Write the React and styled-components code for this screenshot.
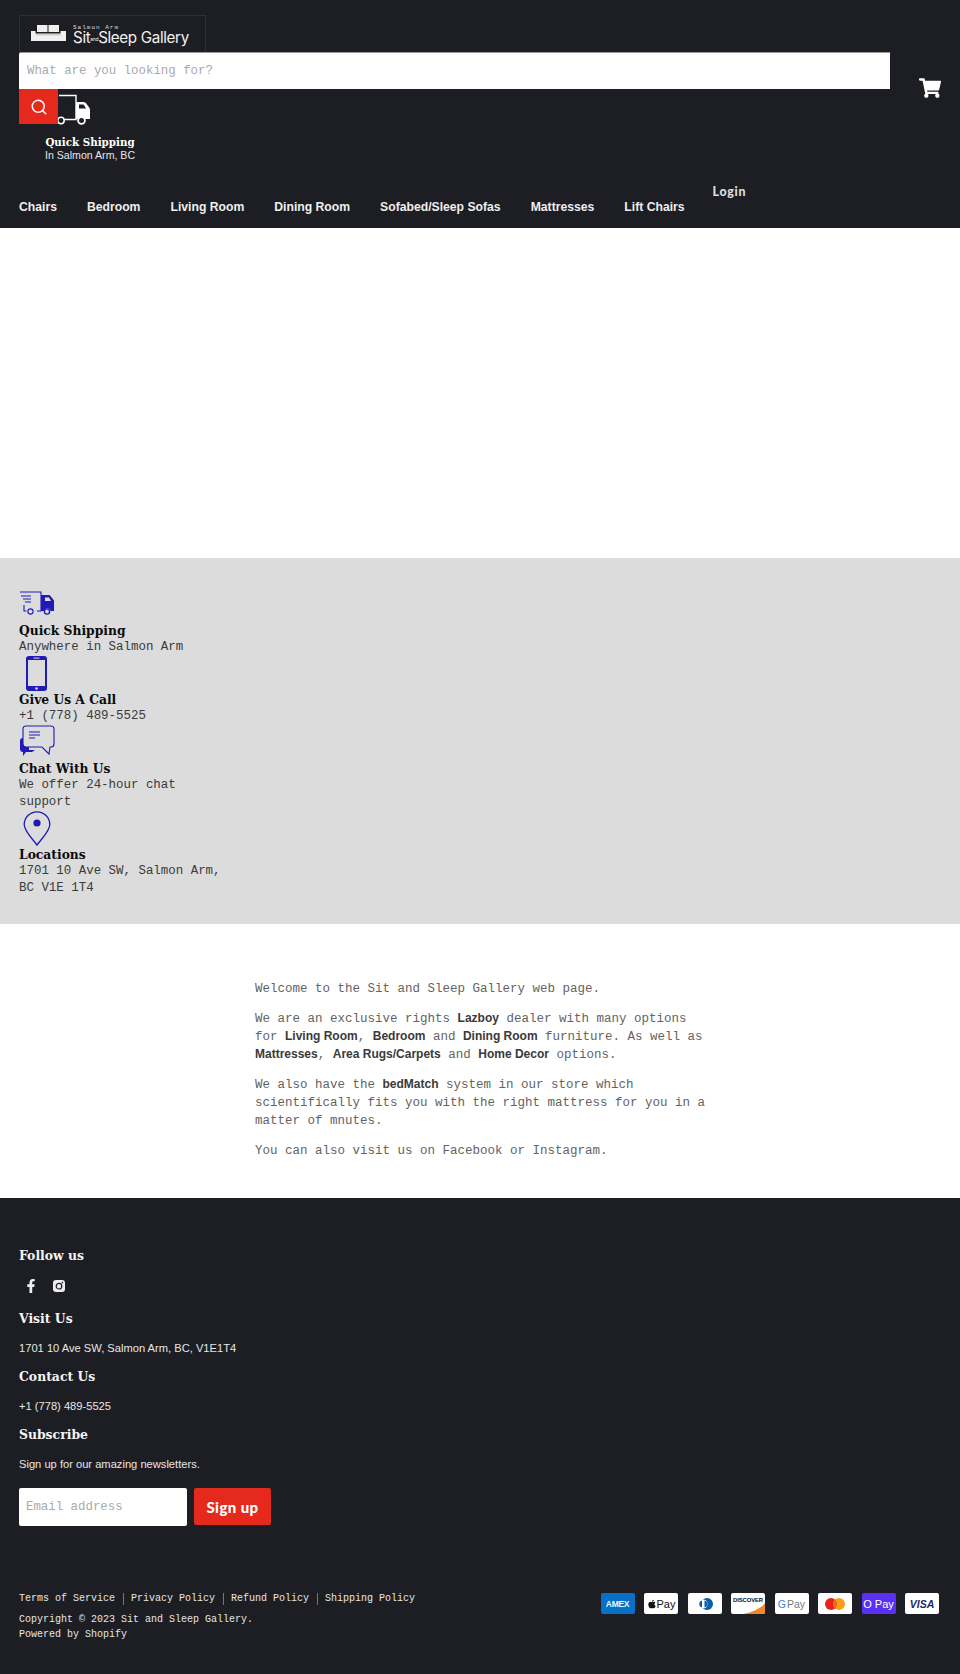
import React from "react";
import styled, { createGlobalStyle } from "styled-components";
import { FaApple, FaFacebookF, FaShoppingCart } from "react-icons/fa";
import { Search } from "lucide-react";

const MONO = `"Liberation Mono", monospace`;
const SANS = `"Liberation Sans", Arial, sans-serif`;
const SERIF = `"DejaVu Serif", serif`;
const DARK = "#1d1e24";
const RED = "#e5291c";
const BLUE = "#1f1ab8";

const GlobalStyle = createGlobalStyle`
  * { box-sizing: border-box; }
  body { margin: 0; background: #fff; font-family: ${SANS}; }
`;

// Header
const Header = styled.header`
  background: ${DARK};
  height: 228px;
  padding: 15px 19px 0;
  color: #fff;
`;
const TopRow = styled.div`
  display: flex;
  justify-content: space-between;
  height: 162px;
`;
const TopLeft = styled.div`
  width: 871px;
`;
const LogoBox = styled.div`
  width: 187px;
  height: 37px;
  border: 1px solid #2d2f36;
  border-bottom: 0;
  padding: 9px 0 0 11px;
  display: flex;
  gap: 7px;
`;
const LogoText = styled.div`
  display: flex;
  flex-direction: column;
  font-family: Inter, sans-serif;
  color: #f2f2f2;
`;
const LogoSmall = styled.span`
  font-family: ${MONO};
  font-size: 6px;
  line-height: 5px;
  letter-spacing: 1px;
  color: #ddd;
`;
const LogoName = styled.span`
  font-size: 15.2px;
  line-height: 15px;
  letter-spacing: -0.35px;
  white-space: nowrap;
`;
const LogoAnd = styled.span`
  font-size: 5px;
  vertical-align: 2px;
`;
const SearchInput = styled.input`
  display: block;
  width: 871px;
  height: 37px;
  border: 0;
  border-top: 1px solid #999;
  border-radius: 2px 0 0 0;
  background: #fff;
  padding: 0 8px;
  font-family: ${MONO};
  font-size: 12.4px;
  outline: none;
  &::placeholder { color: #aaa; opacity: 1; }
`;
const ShipRow = styled.div`
  display: flex;
`;
const SearchButton = styled.button`
  position: relative;
  z-index: 1;
  width: 39px;
  height: 35px;
  border: 0;
  padding: 0;
  background: ${RED};
  color: #fff;
  display: flex;
  align-items: center;
  justify-content: center;
`;
const ShipBlock = styled.div`
  margin-left: -13px;
  padding-top: 5px;
  width: 90px;
  text-align: center;
`;
const ShipIcon = styled.svg`
  display: block;
  width: 45px;
  height: 31px;
`;
const ShipTitle = styled.div`
  font-family: ${SERIF};
  font-weight: 700;
  font-size: 10.3px;
  line-height: 14px;
  margin-top: 10px;
  white-space: nowrap;
`;
const ShipSub = styled.div`
  font-size: 10.6px;
  line-height: 13px;
  color: #e6e6e6;
  white-space: nowrap;
`;
const CartLink = styled.a`
  color: #fff;
  font-size: 22px;
  line-height: 0;
  margin: 62px 0 0 0;
`;
const Nav = styled.nav`
  display: flex;
  gap: 30px;
  height: 36px;
`;
const NavItem = styled.a`
  font-weight: 700;
  font-size: 12.2px;
  line-height: 15px;
  margin-top: 23px;
  color: #eee;
  white-space: nowrap;
`;
const LoginLink = styled.a`
  font-family: Lato, sans-serif;
  font-weight: 900;
  font-size: 12.4px;
  line-height: 15px;
  letter-spacing: 0.7px;
  margin: 7px 0 0 -2px;
  color: #ddd;
`;

// Empty banner
const Banner = styled.div`
  height: 330px;
  background: #fff;
`;

// Feature band
const Band = styled.section`
  background: #dcdcdc;
  height: 366px;
  padding: 31px 19px 0;
  width: 100%;
`;
const Feature = styled.div`
  width: 210px;
`;
const FeatureIcon = styled.svg`
  display: block;
  margin-left: ${(p) => p.$shift || 0}px;
`;
const FeatureTitle = styled.div`
  font-family: ${SERIF};
  font-weight: 700;
  font-size: 12.3px;
  line-height: 17px;
  color: #0b0b0b;
  white-space: nowrap;
`;
const FeatureText = styled.div`
  font-family: ${MONO};
  font-size: 12.45px;
  line-height: 17px;
  color: #3a3a3a;
`;

// Welcome copy
const Copy = styled.section`
  background: #fff;
  height: 274px;
  padding: 56px 0 0 255px;
`;
const CopyInner = styled.div`
  width: 452px;
`;
const Para = styled.p`
  margin: 0 0 12px;
  font-family: ${MONO};
  font-size: 12.5px;
  line-height: 18px;
  color: #636363;
  strong {
    font-family: ${SANS};
    font-size: 12px;
    line-height: 0;
    font-weight: 700;
    color: #3a3a3a;
  }
`;

// Footer
const Footer = styled.footer`
  background: ${DARK};
  height: 476px;
  padding: 50px 19px 0;
  color: #fff;
`;
const FooterTitle = styled.h3`
  margin: 0;
  font-family: ${SERIF};
  font-weight: 700;
  font-size: 12.4px;
  line-height: 16px;
  color: #f5f5f5;
`;
const Socials = styled.div`
  display: flex;
  align-items: center;
  gap: 15px;
  height: 30px;
  margin: 7px 0 10px 5px;
  font-size: 14px;
  color: #eee;
`;
const FooterText = styled.p`
  margin: 13px 0 13px;
  font-size: 11.15px;
  line-height: 16px;
  color: #e6e6e6;
`;
const SignupRow = styled.form`
  display: flex;
  gap: 7px;
  margin-top: 16px;
`;
const EmailInput = styled.input`
  width: 168px;
  height: 38px;
  border: 0;
  border-radius: 2px;
  padding: 0 7px;
  font-family: ${MONO};
  font-size: 12.4px;
  outline: none;
  &::placeholder { color: #aaa; opacity: 1; }
`;
const SignupButton = styled.button`
  width: 77px;
  height: 37px;
  border: 0;
  border-radius: 2px;
  background: ${RED};
  color: #fff;
  font-family: Lato, sans-serif;
  font-weight: 900;
  font-size: 15px;
  letter-spacing: 0.4px;
`;
const BottomRow = styled.div`
  display: flex;
  justify-content: space-between;
  margin-top: 66px;
`;
const LegalLinks = styled.div`
  display: flex;
  align-items: center;
  height: 14px;
  font-family: ${MONO};
  font-size: 10px;
  color: #e6e6e6;
`;
const LegalLink = styled.a`
  padding-right: 7.5px;
  margin-right: 7.5px;
  border-right: 1px solid #777;
  line-height: 12px;
  white-space: nowrap;
  &:last-child { border: 0; margin: 0; padding: 0; }
`;
const Legal = styled.div`
  font-family: ${MONO};
  font-size: 10px;
  line-height: 15px;
  margin-top: 6px;
  color: #e6e6e6;
`;
const Payments = styled.div`
  display: flex;
  gap: 9.5px;
  margin: 1px 2px 0 0;
`;
const PayCard = styled.div`
  width: 34px;
  height: 21px;
  border-radius: 2px;
  overflow: hidden;
  background: ${(p) => p.$bg || "#fff"};
  color: ${(p) => p.$color || "#111"};
  display: flex;
  align-items: center;
  justify-content: center;
  position: relative;
  font-family: ${SANS};
  font-size: ${(p) => p.$size || 9}px;
  font-weight: ${(p) => p.$weight || 500};
  font-style: ${(p) => (p.$italic ? "italic" : "normal")};
  letter-spacing: ${(p) => p.$track || 0}px;
`;
const DiscoverText = styled.span`
  position: relative;
  margin-top: -7px;
`;
const GoogleG = styled.span`
  color: #3c7de6;
  margin-right: 1px;
`;

// Drawn icons
const TruckWhite = () => (
  <ShipIcon viewBox="0 0 45 31">
    <path d="M14 1.500h17v24H14" fill="none" stroke="#fff" strokeWidth="1.400" />
    <path d="M31 8h7.500c1 0 1.800.4 2.500 1.200l3 4c.6.8 1 1.600 1 2.600v9.200H31z" fill="#fff" />
    <path d="M34 10.500h4.500l2.600 4H34z" fill="#1d1e24" />
    <circle cx="16" cy="26.500" r="3.200" fill="#1d1e24" stroke="#fff" strokeWidth="1.500" />
    <circle cx="36.500" cy="26.500" r="3.400" fill="#1d1e24" stroke="#fff" strokeWidth="1.800" />
  </ShipIcon>
);

const TruckBlue = () => (
  <FeatureIcon width="36" height="33" viewBox="0 2 36 33">
    <g fill="none" stroke={BLUE} strokeWidth="1.100">
      <path d="M1 5h21v19H18" />
      <path d="M2 9h10M4 12h8M6 15h6" />
      <path d="M5 18v6h2.500" />
      <circle cx="11.500" cy="24.500" r="2.600" />
    </g>
    <path d="M22 8h7.500c1 0 1.500.3 2 1l3.500 4.500V24h-3.500a3.300 3.300 0 0 0-6.500 0H22z" fill={BLUE} />
    <path d="M26 10.500h4l2 3.500h-6z" fill="#dcdcdc" />
    <circle cx="28" cy="24.500" r="2.600" fill="#dcdcdc" stroke={BLUE} strokeWidth="1.400" />
  </FeatureIcon>
);

const PhoneBlue = () => (
  <FeatureIcon $shift={7} width="21" height="35" viewBox="0 0 21 35">
    <rect x="0" y="0" width="21" height="35" rx="3" fill={BLUE} />
    <rect x="2" y="4" width="17" height="26" fill="#dcdcdc" />
    <rect x="7.500" y="1.600" width="6" height="1" fill="#dcdcdc" />
    <circle cx="10.500" cy="32.500" r="1.300" fill="#dcdcdc" />
  </FeatureIcon>
);

const ChatBlue = () => (
  <FeatureIcon width="36" height="35" viewBox="0 0 36 35">
    <path d="M1 16c0-2 1-3 3-3h6v12h6l-3 2H7l-3 4v-4c-2 0-3-1-3-3z" fill={BLUE} />
    <path d="M7 1h25c2 0 3 1 3 3v15c0 2-1 3-3 3h-1l-1 7-7-7H7c-2 0-3-1-3-3V4c0-2 1-3 3-3z" fill="#dcdcdc" stroke={BLUE} strokeWidth="1.100" />
    <path d="M10 7h11M10 10h11M10 13h6" stroke={BLUE} strokeWidth="1.200" />
  </FeatureIcon>
);

const PinBlue = () => (
  <FeatureIcon $shift={4} width="28" height="35" viewBox="0 0 28 35">
    <path d="M14 34C8 26 1.200 20 1.200 13.500A12.800 12.800 0 0 1 14 .8a12.800 12.800 0 0 1 12.800 12.700C26.800 20 20 26 14 34z" fill="none" stroke={BLUE} strokeWidth="1.300" />
    <circle cx="14" cy="12" r="3.600" fill={BLUE} />
  </FeatureIcon>
);

const SofaLogo = () => (
  <svg width="35" height="16" viewBox="0 0 35 16" style={{ flex: "none" }}>
    <path d="M6 0h10.500v7H6zM17.500 0H28v7H17.500z" fill="#f0f0f0" />
    <path d="M0 6h4.500v2.500h25V6H35v10H0z" fill="#f0f0f0" />
    <path d="M5 9.500h25v.7H5z" fill="#aaa" />
  </svg>
);

const InstagramFilled = () => (
  <svg width="12" height="12" viewBox="0 0 12 12">
    <rect width="12" height="12" rx="3" fill="#eee" />
    <circle cx="6" cy="6.200" r="2.800" fill="none" stroke="#1d1e24" strokeWidth="1.200" />
    <circle cx="9.400" cy="2.600" r="0.800" fill="#1d1e24" />
  </svg>
);

const NAV = ["Chairs", "Bedroom", "Living Room", "Dining Room", "Sofabed/Sleep Sofas", "Mattresses", "Lift Chairs"];

export default function App() {
  return (
    <>
      <GlobalStyle />
      <Header>
        <TopRow>
          <TopLeft>
            <LogoBox>
              <SofaLogo />
              <LogoText>
                <LogoSmall>Salmon Arm</LogoSmall>
                <LogoName>
                  Sit<LogoAnd>and</LogoAnd>Sleep Gallery
                </LogoName>
              </LogoText>
            </LogoBox>
            <SearchInput placeholder="What are you looking for?" />
            <ShipRow>
              <SearchButton aria-label="Search">
                <Search size={18} strokeWidth={2} />
              </SearchButton>
              <ShipBlock>
                <TruckWhite />
                <ShipTitle>Quick Shipping</ShipTitle>
                <ShipSub>In Salmon Arm, BC</ShipSub>
              </ShipBlock>
            </ShipRow>
          </TopLeft>
          <CartLink aria-label="Cart">
            <FaShoppingCart />
          </CartLink>
        </TopRow>
        <Nav>
          {NAV.map((item) => (
            <NavItem key={item}>{item}</NavItem>
          ))}
          <LoginLink>Login</LoginLink>
        </Nav>
      </Header>

      <Banner />

      <Band>
        <Feature>
          <TruckBlue />
          <FeatureTitle>Quick Shipping</FeatureTitle>
          <FeatureText>Anywhere in Salmon Arm</FeatureText>
        </Feature>
        <Feature>
          <PhoneBlue />
          <FeatureTitle>Give Us A Call</FeatureTitle>
          <FeatureText>+1 (778) 489-5525</FeatureText>
        </Feature>
        <Feature>
          <ChatBlue />
          <FeatureTitle>Chat With Us</FeatureTitle>
          <FeatureText>We offer 24-hour chat support</FeatureText>
        </Feature>
        <Feature>
          <PinBlue />
          <FeatureTitle>Locations</FeatureTitle>
          <FeatureText>1701 10 Ave SW, Salmon Arm, BC V1E 1T4</FeatureText>
        </Feature>
      </Band>

      <Copy>
        <CopyInner>
          <Para>Welcome to the Sit and Sleep Gallery web page.</Para>
          <Para>
            We are an exclusive rights <strong>Lazboy</strong> dealer with many options for{" "}
            <strong>Living Room</strong>, <strong>Bedroom</strong> and <strong>Dining Room</strong> furniture. As well as{" "}
            <strong>Mattresses</strong>, <strong>Area Rugs/Carpets</strong> and <strong>Home Decor</strong> options.
          </Para>
          <Para>
            We also have the <strong>bedMatch</strong> system in our store which scientifically fits you with the right
            mattress for you in a matter of mnutes.
          </Para>
          <Para>You can also visit us on Facebook or Instagram.</Para>
        </CopyInner>
      </Copy>

      <Footer>
        <FooterTitle>Follow us</FooterTitle>
        <Socials>
          <FaFacebookF />
          <InstagramFilled />
        </Socials>
        <FooterTitle>Visit Us</FooterTitle>
        <FooterText>1701 10 Ave SW, Salmon Arm, BC, V1E1T4</FooterText>
        <FooterTitle>Contact Us</FooterTitle>
        <FooterText>+1 (778) 489-5525</FooterText>
        <FooterTitle>Subscribe</FooterTitle>
        <FooterText>Sign up for our amazing newsletters.</FooterText>
        <SignupRow>
          <EmailInput placeholder="Email address" />
          <SignupButton type="button">Sign up</SignupButton>
        </SignupRow>
        <BottomRow>
          <div>
            <LegalLinks>
              <LegalLink>Terms of Service</LegalLink>
              <LegalLink>Privacy Policy</LegalLink>
              <LegalLink>Refund Policy</LegalLink>
              <LegalLink>Shipping Policy</LegalLink>
            </LegalLinks>
            <Legal>
              Copyright © 2023 Sit and Sleep Gallery.
              <br />
              Powered by Shopify
            </Legal>
          </div>
          <Payments>
            <PayCard $bg="#0a6fc9" $color="#dff" $size={8.5} $weight={700} $track={-0.3}>AMEX</PayCard>
            <PayCard $size={11}><FaApple size={10} />Pay</PayCard>
            <PayCard>
              <svg width="20" height="14" viewBox="0 0 20 14">
                <circle cx="12" cy="7" r="6" fill="#0a5ea8" />
                <circle cx="8" cy="7" r="4.500" fill="#fff" />
                <path d="M7 3.500v7a3.600 3.600 0 0 1 0-7zM9.500 3.500v7a3.600 3.600 0 0 0 0-7z" fill="#0a5ea8" />
              </svg>
            </PayCard>
            <PayCard $size={5.900} $weight={700} $track={-0.1}>
              <svg width="34" height="21" viewBox="0 0 34 21" style={{ position: "absolute", left: 0, top: 0 }}>
                <path d="M34 21H12C22 19 30 15 34 10z" fill="#ee8a2c" />
              </svg>
              <DiscoverText>DISCOVER</DiscoverText>
            </PayCard>
            <PayCard $size={10.500} $color="#777"><GoogleG>G</GoogleG>Pay</PayCard>
            <PayCard>
              <svg width="22" height="14" viewBox="0 0 22 14">
                <circle cx="7" cy="7" r="6" fill="#e6231f" />
                <circle cx="15" cy="7" r="6" fill="#f79e1b" />
                <path d="M11 2.500a6 6 0 0 1 0 9 6 6 0 0 1 0-9z" fill="#f0641e" />
              </svg>
            </PayCard>
            <PayCard $bg="#5a31f4" $color="#fff" $size={11}>O Pay</PayCard>
            <PayCard $color="#1a2a6b" $size={10.500} $weight={700} $italic>VISA</PayCard>
          </Payments>
        </BottomRow>
      </Footer>
    </>
  );
}
